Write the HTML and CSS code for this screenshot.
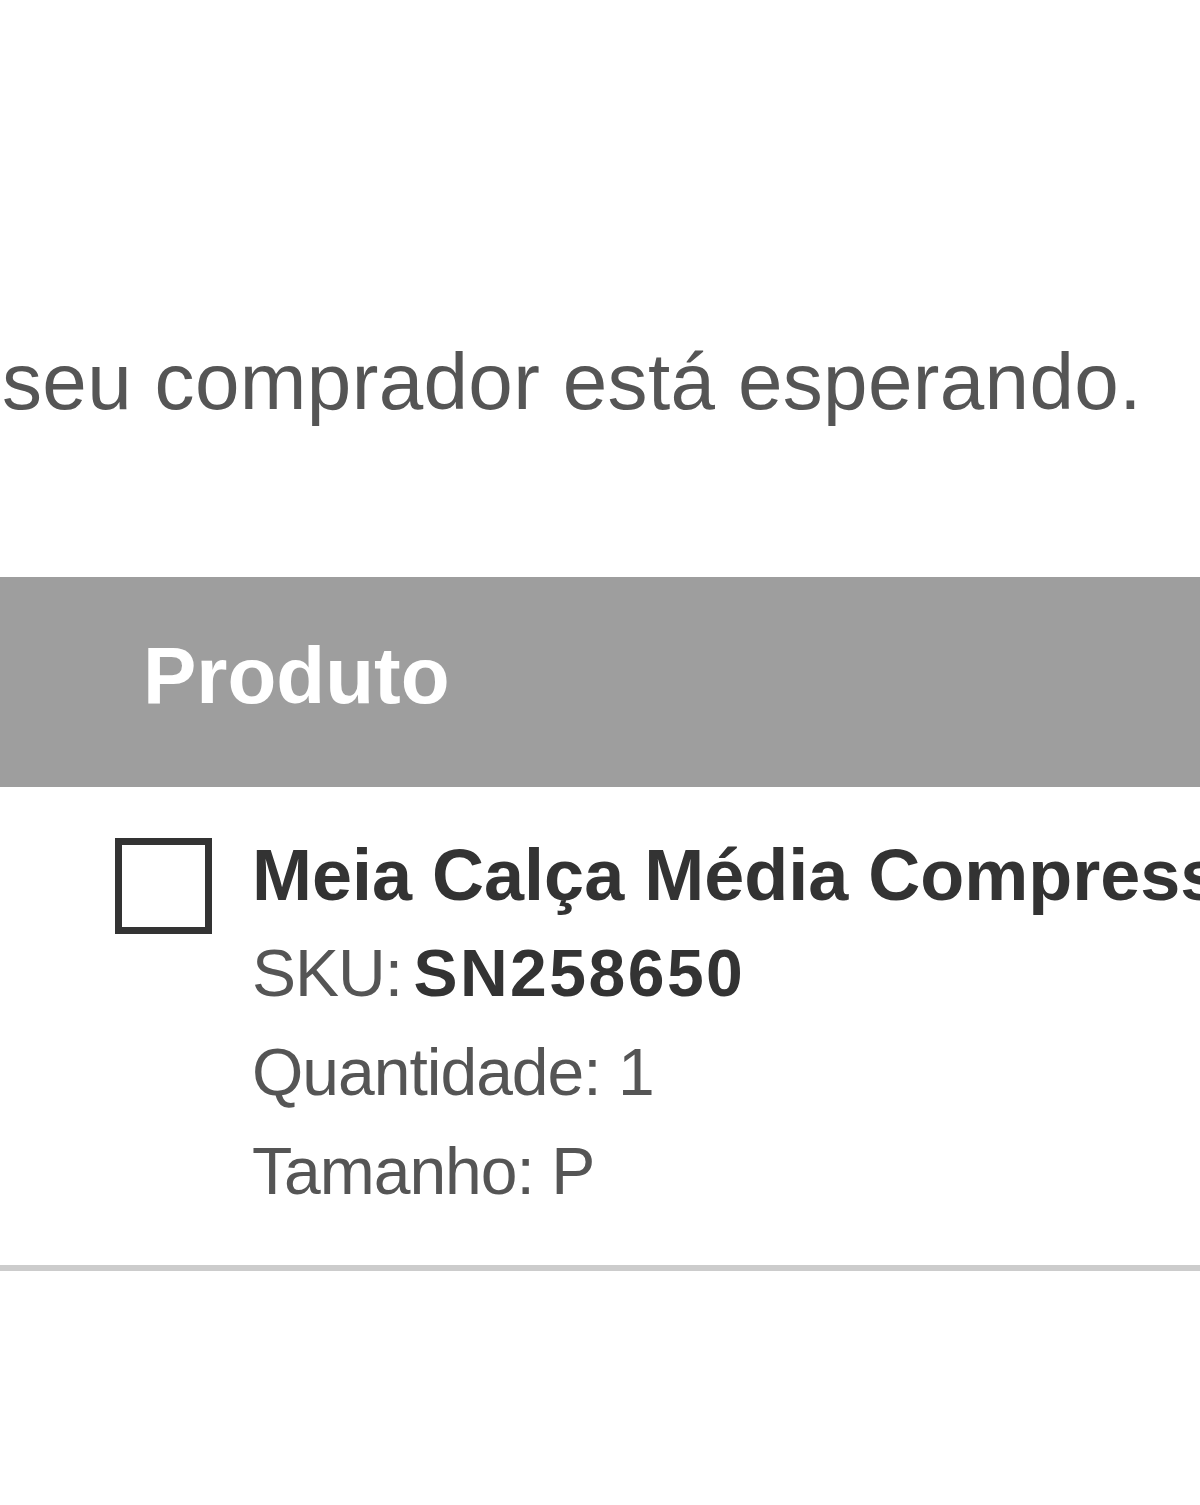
FILE: index.html
```html
<!DOCTYPE html>
<html>
  <head>
    <meta charset="UTF-8" />
    <title>Pedido</title>
    <link rel="stylesheet" href="styles.css">
  </head>
  <body>
    <p class="intro">seu comprador está esperando.</p>

    <div class="order">
      <div class="order-head">Produto</div>

      <div class="order-item">
        <div class="check"></div>
        <div class="item-info">
          <div class="item-name">Meia Calça Média Compressão</div>
          <div class="item-line">SKU: <b>SN258650</b></div>
          <div class="item-line">Quantidade: 1</div>
          <div class="item-line">Tamanho: P</div>
        </div>
      </div>
    </div>
  </body>
</html>
```

FILE: styles.css
```css
* {
  box-sizing: border-box;
}

body {
  margin: 0;
  padding-top: 332px;
  font-family: "Liberation Sans", Arial, sans-serif;
  background-color: #fff;
  color: #333;
  overflow: hidden;
}

.intro {
  margin: 0;
  padding-left: 2px;
  font-size: 80px;
  line-height: 100px;
  letter-spacing: 0.35px;
  color: #555;
  white-space: nowrap;
}

.order {
  margin-top: 145px;
  border-bottom: 6px solid #ccc;
}

.order-head {
  height: 210px;
  display: flex;
  align-items: center;
  padding-left: 143px;
  padding-bottom: 12px;
  background-color: #9e9e9e;
  color: #fff;
  font-size: 80px;
  font-weight: bold;
}

.order-item {
  display: flex;
  align-items: flex-start;
  gap: 40px;
  padding: 39px 0 44px 115px;
  white-space: nowrap;
}

.check {
  flex: none;
  width: 97px;
  height: 96px;
  margin-top: 12px;
  border: 7px solid #333;
  background-color: #fff;
}

.item-name {
  font-size: 72px;
  line-height: 98px;
  font-weight: bold;
  color: #333;
}

.item-line {
  font-size: 66px;
  line-height: 99px;
  letter-spacing: -1px;
  color: #555;
}

.item-line b {
  margin-left: -6px;
  letter-spacing: 2.5px;
  color: #333;
}
```
